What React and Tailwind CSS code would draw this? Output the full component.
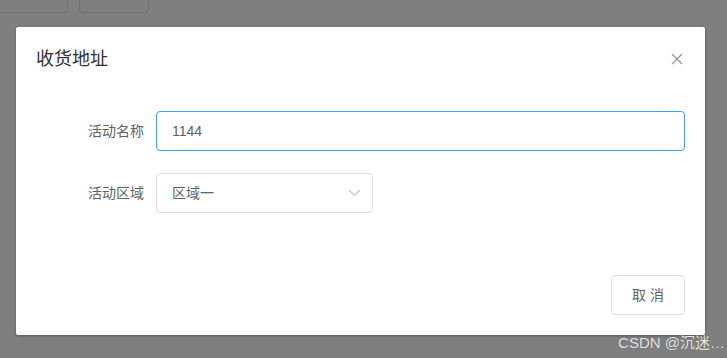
import React from "react";

const App = () => {
  return (
    <div
      className="relative w-full h-[358px] overflow-hidden bg-[#7f7f7f]"
      style={{ fontFamily: '"Liberation Sans", "Noto Sans CJK SC", sans-serif' }}
    >
      {/* buttons of the page behind the mask */}
      <div className="flex gap-[11px] -mt-[27px] -ml-[11px]">
        <div className="w-[79px] h-[40px] rounded-[4px] border border-[#6e6f73]" />
        <div className="w-[70px] h-[40px] rounded-[4px] border border-[#6e6f73]" />
      </div>

      {/* dialog */}
      <div className="ml-[16px] mt-[14px] w-[689px] bg-white rounded-[2px] shadow-[0_1px_3px_rgba(0,0,0,0.3)]">
        <div className="flex items-center justify-between pt-[20px] px-[20px] pb-[10px]">
          <span className="text-[18px] leading-[24px] text-[#303133]">收货地址</span>
          <button className="w-[16px] h-[16px] flex items-center justify-center text-[#909399]">
            <svg width="12" height="12" viewBox="0 0 12 12" fill="none" stroke="currentColor" strokeWidth="1.2">
              <path d="M1 1 L11 11 M11 1 L1 11" />
            </svg>
          </button>
        </div>

        <div className="px-[20px] py-[30px]">
          <div className="flex items-center mb-[22px]">
            <label className="w-[120px] pr-[12px] text-right text-[14px] text-[#606266]">活动名称</label>
            <div className="flex-1 h-[40px] rounded-[4px] border border-[#409eff] flex items-center px-[15px] text-[14px] text-[#606266]">
              1144
            </div>
          </div>
          <div className="flex items-center mb-[22px]">
            <label className="w-[120px] pr-[12px] text-right text-[14px] text-[#606266]">活动区域</label>
            <div className="w-[217px] h-[40px] rounded-[4px] border border-[#dcdfe6] flex items-center justify-between pl-[15px] pr-[5px] text-[14px] text-[#606266]">
              <span>区域一</span>
              <span className="w-[25px] flex items-center justify-center text-[#c0c4cc]">
                <svg width="13" height="8" viewBox="0 0 13 8" fill="none" stroke="currentColor" strokeWidth="1.2">
                  <path d="M1 1 L6.5 6.5 L12 1" />
                </svg>
              </span>
            </div>
          </div>
        </div>

        <div className="flex justify-end pt-[10px] px-[20px] pb-[20px]">
          <button className="h-[40px] px-[20px] rounded-[4px] border border-[#dcdfe6] bg-white text-[14px] text-[#606266]">
            取 消
          </button>
        </div>
      </div>

      {/* watermark */}
      <div className="absolute right-[2px] bottom-[7px] text-[15px] leading-[16px] text-[#e8e8e8] [text-shadow:0_0_1px_rgba(0,0,0,0.4)]">
        CSDN @沉迷…
      </div>
    </div>
  );
};

export default App;
